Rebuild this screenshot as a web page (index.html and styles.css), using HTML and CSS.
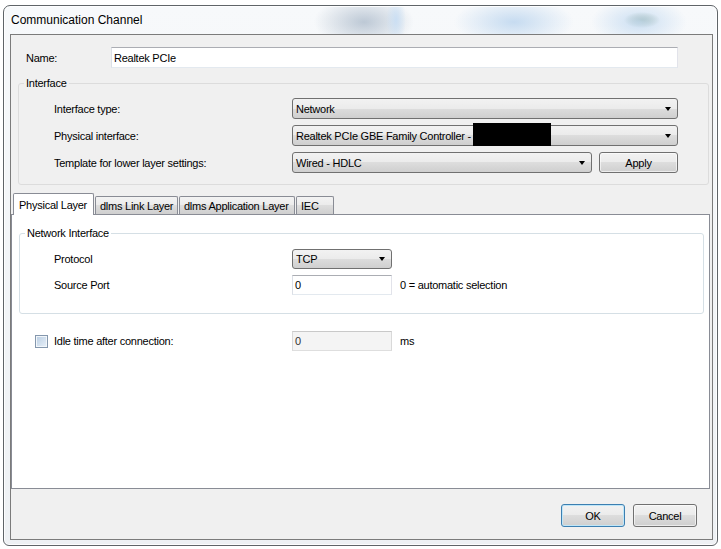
FILE: index.html
```html
<!DOCTYPE html>
<html lang="en">
<head>
    <meta charset="UTF-8">
    <title>Communication Channel</title>
    <link rel="stylesheet" href="styles.css">
</head>
<body>
    <div class="window">
        <div class="titlebar">Communication Channel</div>
        <div class="client">
            <div class="name-row">
                <span class="name-label">Name:</span>
                <div class="textbox name-box">Realtek PCIe</div>
            </div>

            <fieldset class="group interface-group">
                <legend>Interface</legend>
                <div class="group-body interface-body">
                    <div class="field-row">
                        <span class="field-label">Interface type:</span>
                        <div class="combo wide">Network</div>
                    </div>
                    <div class="field-row">
                        <span class="field-label">Physical interface:</span>
                        <div class="combo wide">Realtek PCIe GBE Family Controller -<span class="redacted"></span></div>
                    </div>
                    <div class="field-row">
                        <span class="field-label">Template for lower layer settings:</span>
                        <div class="combo mid">Wired - HDLC</div>
                        <div class="button apply">Apply</div>
                    </div>
                </div>
            </fieldset>

            <div class="tabs">
                <div class="tab active" style="width: 81px">Physical Layer</div>
                <div class="tab" style="width: 83px">dlms Link Layer</div>
                <div class="tab" style="width: 116px">dlms Application Layer</div>
                <div class="tab" style="width: 38px">IEC</div>
            </div>
            <div class="tab-panel">
                <fieldset class="group net-group">
                    <legend>Network Interface</legend>
                    <div class="group-body net-body">
                        <div class="field-row">
                            <span class="field-label">Protocol</span>
                            <div class="combo short">TCP</div>
                        </div>
                        <div class="field-row">
                            <span class="field-label">Source Port</span>
                            <div class="textbox small">0</div>
                            <span class="hint">0 = automatic selection</span>
                        </div>
                    </div>
                </fieldset>

                <div class="check-row">
                    <span class="checkbox"></span>
                    <span class="check-label">Idle time after connection:</span>
                    <div class="textbox small disabled">0</div>
                    <span class="hint">ms</span>
                </div>
            </div>

            <div class="buttons">
                <div class="button default">OK</div>
                <div class="button">Cancel</div>
            </div>
        </div>
    </div>
</body>
</html>
```

FILE: styles.css
```css
:root {
    --client-bg: #f0f0f0;
    --tab-border: #898c95;
    --group-border: #d5dfe5;
    --button-face: linear-gradient(#f2f2f2, #ebebeb 50%, #dddddd 50%, #cfcfcf);
}

body {
    margin: 0;
    background: #fff;
    font-family: "Liberation Sans", Arial, sans-serif;
    font-size: 11px;
    letter-spacing: -0.25px;
    color: #000;
}

/* Aero glass frame, with the blurred desktop showing through the title */
.window {
    box-sizing: border-box;
    width: 715px;
    height: 541px;
    margin: 5px 0 0 3px;
    padding: 0 4px 5px 6px;
    border: 1px solid #5f6468;
    border-radius: 7px 7px 6px 6px;
    box-shadow: inset 0 0 0 1px rgba(255, 255, 255, 0.85);
    background:
        radial-gradient(ellipse 10px 24px at 392px 14px, rgba(200, 222, 244, 0.9), transparent),
        radial-gradient(ellipse 50px 26px at 360px 16px, rgba(150, 168, 188, 0.6), transparent),
        radial-gradient(ellipse 60px 24px at 510px 16px, rgba(186, 212, 238, 0.8), transparent),
        radial-gradient(ellipse 48px 24px at 635px 16px, rgba(192, 216, 240, 0.8), transparent),
        radial-gradient(ellipse 18px 8px at 638px 14px, rgba(110, 140, 105, 0.7), transparent),
        linear-gradient(#f7f9fb, #eef1f4);
}

.titlebar {
    height: 28px;
    line-height: 28px;
    padding-left: 1px;
    font-size: 12px;
    letter-spacing: 0;
    text-shadow: 0 0 6px #fff;
}

.client {
    box-sizing: border-box;
    height: 506px;
    border: 1px solid #7b7b7b;
    background: var(--client-bg);
}

.name-row {
    display: flex;
    align-items: center;
    margin: 12px 0 0 15px;
}

.name-label {
    width: 85px;
}

.textbox {
    box-sizing: border-box;
    display: flex;
    align-items: center;
    height: 21px;
    padding-left: 2px;
    border: 1px solid;
    border-color: #abadb3 #e2e3ea #e3e9ef #dbdfe6;
    background: #fff;
}

.name-box {
    width: 567px;
}

.textbox.small {
    width: 100px;
    height: 20px;
}

.textbox.disabled {
    background: #f4f4f4;
    border-color: #c9c9c9 #d9d9d9 #dedede #d9d9d9;
    color: #333;
}

/* group boxes */
fieldset.group {
    box-sizing: border-box;
    min-width: 0;
    margin: 0;
    padding: 0;
    border: 1px solid var(--group-border);
    border-radius: 3px;
}

.group legend {
    margin-left: 5px;
    padding: 0 2px;
    line-height: 13px;
}

.group-body {
    display: flex;
    flex-direction: column;
    gap: 6px;
}

.interface-group {
    width: 691px;
    margin: 9px 0 0 7px !important;
    border-color: #dcdcdc !important;
}

.interface-body {
    padding: 8px 0 11px 35px;
}

.net-group {
    width: 685px;
    margin: 12px 0 0 7px !important;
}

.net-body {
    padding: 9px 0 18px 34px;
}

.field-row {
    display: flex;
    align-items: center;
}

.field-label {
    width: 238px;
}

.combo {
    box-sizing: border-box;
    position: relative;
    display: flex;
    align-items: center;
    height: 21px;
    padding-left: 3px;
    border: 1px solid #707070;
    border-radius: 3px;
    background: var(--button-face);
}

.combo::after {
    content: "";
    position: absolute;
    right: 6px;
    top: 8px;
    border-style: solid;
    border-width: 4px 3.5px 0;
    border-color: #000 transparent transparent;
}

.combo.wide {
    width: 386px;
}

.combo.mid {
    width: 300px;
}

.combo.short {
    width: 100px;
    height: 20px;
}

.combo.short::after {
    top: 7px;
}

.redacted {
    position: absolute;
    left: 180px;
    top: -3px;
    width: 78px;
    height: 23px;
    background: #000;
}

.button {
    box-sizing: border-box;
    display: flex;
    align-items: center;
    justify-content: center;
    width: 64px;
    height: 23px;
    border: 1px solid #707070;
    border-radius: 3px;
    background: var(--button-face);
    box-shadow: inset 0 0 0 1px rgba(255, 255, 255, 0.6);
}

.button.apply {
    width: 79px;
    height: 21px;
    margin-left: 7px;
}

.button.default {
    border-color: #3c7fb1;
    box-shadow: inset 0 0 0 1px #bfe6f8;
}

/* tabs */
.tabs {
    position: relative;
    z-index: 1;
    display: flex;
    align-items: flex-end;
    height: 21px;
    margin: 8px 0 0 2px;
}

.tab {
    box-sizing: border-box;
    height: 18px;
    margin-right: 1px;
    padding-left: 4px;
    border: 1px solid var(--tab-border);
    border-bottom: none;
    border-radius: 2px 2px 0 0;
    background: linear-gradient(#f3f3f3, #ebebeb 50%, #dddddd 50%, #cfcfcf);
    line-height: 19px;
    white-space: nowrap;
}

.tab.active {
    height: 22px;
    margin-bottom: -1px;
    padding-left: 5px;
    background: #fff;
    line-height: 22px;
}

.tab-panel {
    box-sizing: border-box;
    width: 699px;
    height: 275px;
    border: 1px solid var(--tab-border);
    background: #fff;
}

.check-row {
    display: flex;
    align-items: center;
    height: 20px;
    margin-top: 17px;
    padding-left: 23px;
}

.checkbox {
    box-sizing: border-box;
    width: 13px;
    height: 13px;
    margin-right: 6px;
    border: 1px solid #8497ad;
    background: linear-gradient(135deg, #b9cde2, #e9f1f9);
    box-shadow: inset 0 0 0 1px #f2f6fa;
}

.check-label {
    width: 238px;
}

.hint {
    margin-left: 8px;
}

.buttons {
    display: flex;
    justify-content: flex-end;
    gap: 8px;
    margin-top: 15px;
    padding-right: 15px;
}
```
